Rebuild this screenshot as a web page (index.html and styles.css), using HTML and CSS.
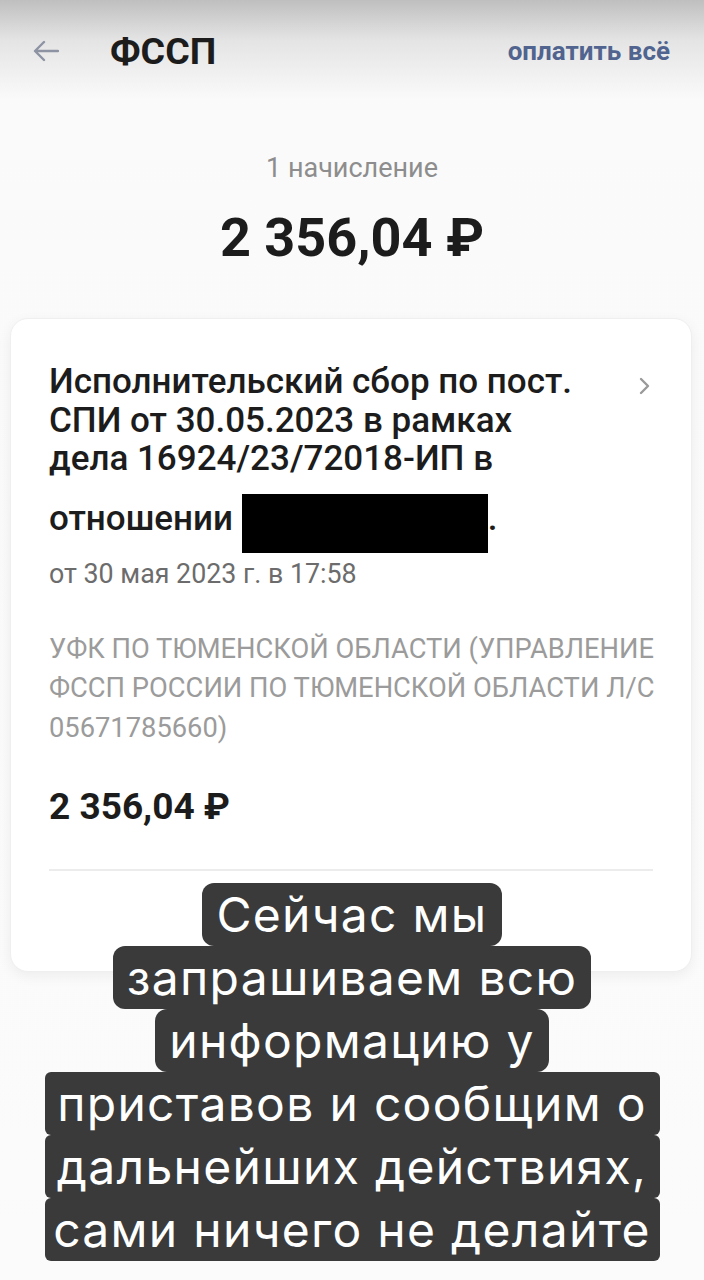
FILE: index.html
```html
<!DOCTYPE html>
<html>
	<head>
		<meta charset="UTF-8">
		<title>ФССП</title>
		<link rel="stylesheet" href="styles.css">
	</head>
	<body>
		<div class="screen">
			<div class="topbar">
				<svg class="back" width="26" height="22" viewBox="0 0 26 22"><path d="M25 11H3M11 2L2 11l9 9" fill="none" stroke="#8d93a3" stroke-width="2.4" stroke-linecap="round" stroke-linejoin="round"/></svg>
				<h1 class="title">ФССП</h1>
				<a href="#" class="payall">оплатить всё</a>
			</div>
			<div class="total">
				<div class="count">1 начисление</div>
				<div class="sum">2 356,04 ₽</div>
			</div>
			<div class="card">
				<div class="card-head">
					<p class="name">Исполнительский сбор по пост.<br>СПИ от 30.05.2023 в рамках<br>дела 16924/23/72018-ИП в<br>отношении <span class="redact"></span>.</p>
					<svg class="chevron" width="12" height="20" viewBox="0 0 12 20"><path d="M2 3l7 7-7 7" fill="none" stroke="#9a9a9a" stroke-width="2.4" stroke-linecap="round" stroke-linejoin="round"/></svg>
				</div>
				<div class="date">от 30 мая 2023 г. в 17:58</div>
				<div class="payee">УФК ПО ТЮМЕНСКОЙ ОБЛАСТИ (УПРАВЛЕНИЕ<br>ФССП РОССИИ ПО ТЮМЕНСКОЙ ОБЛАСТИ Л/С<br>05671785660)</div>
				<div class="amount">2 356,04 ₽</div>
				<div class="line"></div>
				<div class="pay">Оплатить</div>
			</div>
			<div class="caption">
				<span>Сейчас мы</span><br>
				<span>запрашиваем всю</span><br>
				<span>информацию у</span><br>
				<span class="wide">приставов и сообщим о</span><br>
				<span class="wide">дальнейших действиях,</span><br>
				<span class="wide">сами ничего не делайте</span>
			</div>
		</div>
	</body>
</html>
```
FILE: styles.css
```css
*{margin: 0;padding: 0;box-sizing: border-box;}
body{background: #fbfbfb;font-family: Roboto, "Noto Sans", sans-serif;color: #1c1c1c;}
.screen{width: 704px;height: 1280px;position: relative;overflow: hidden;
background: linear-gradient(#bfbfbf 0, #e4e4e4 40px, #fafafa 100px, #fbfbfb 100%);}

.topbar{height: 102px;display: flex;align-items: center;padding: 0 34px 0 33px;}
.back{margin-right: 51px;}
.title{font-size: 37.5px;font-weight: 700;flex: 1;}
.payall{font-size: 26px;font-weight: 700;color: #50648f;text-decoration: none;}

.total{text-align: center;padding-top: 52px;}
.count{font-size: 27px;color: #8d8d8d;line-height: 28px;}
.sum{font-size: 54px;font-weight: 700;line-height: 60px;margin-top: 26px;}

.card{margin: 50px 12px 0 10px;height: 654px;background: #fff;border-radius: 18px;border: 1px solid #efefef;
box-shadow: 0 4px 14px rgba(0,0,0,.06);padding: 44px 38px 0 38px;}
.card-head{display: flex;align-items: flex-start;}
.name{flex: 1;font-size: 35px;font-weight: 500;line-height: 38.5px;white-space: nowrap;}
.redact{display: inline-block;width: 246px;height: 59px;background: #000;vertical-align: -23px;margin-top: 15px;}
.chevron{margin: 13px 2px 0 0;}
.date{font-size: 26.8px;line-height: 30px;color: #6c6c6c;margin-top: 6px;}
.payee{font-size: 27.3px;color: #9b9b9b;line-height: 39.5px;margin-top: 41px;white-space: nowrap;}
.amount{font-size: 37px;line-height: 44px;font-weight: 700;margin-top: 37px;}
.line{height: 2px;background: #ececec;margin-top: 40px;}
.pay{text-align: center;font-size: 26px;line-height: 30px;font-weight: 700;color: #2b3550;margin-top: 41px;}

.caption{position: absolute;left: 0;top: 883px;width: 704px;text-align: center;
font-family: Inter, "Liberation Sans", sans-serif;font-size: 48px;letter-spacing: 1.3px;line-height: 63px;color: #fff;}
.caption span{display: inline-block;white-space: nowrap;background: #3a3a3a;border-radius: 12px;padding: 0 14px;}
.caption .wide{width: 615px;padding: 0;border-radius: 6px;}
```
